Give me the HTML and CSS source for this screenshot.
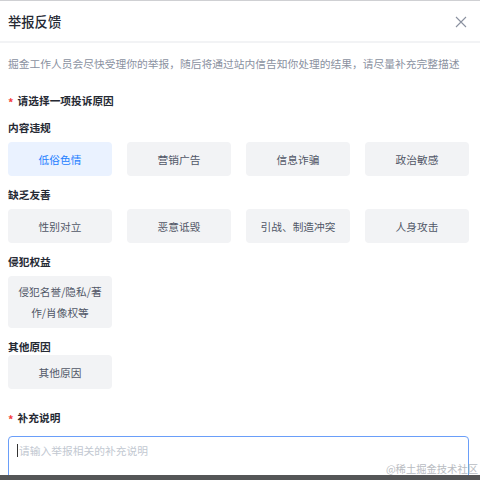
FILE: index.html
```html
<!DOCTYPE html>
<html lang="zh-CN">
<head>
<meta charset="utf-8">
<link rel="stylesheet" href="styles.css">
</head>
<body>
<div class="dialog">
  <div class="header">
    <div class="title">举报反馈</div>
    <svg class="close" width="12" height="12" viewBox="0 0 12 12"><path d="M1 1L11 11M11 1L1 11" stroke="#8a919f" stroke-width="1.1" fill="none"/></svg>
  </div>
  <div class="body">
    <p class="desc">掘金工作人员会尽快受理你的举报，随后将通过站内信告知你处理的结果，请尽量补充完整描述</p>
    <div class="req"><span class="star">*</span>请选择一项投诉原因</div>
    <div class="group">
      <div class="glabel">内容违规</div>
      <div class="opts">
        <div class="opt active">低俗色情</div>
        <div class="opt">营销广告</div>
        <div class="opt">信息诈骗</div>
        <div class="opt">政治敏感</div>
      </div>
    </div>
    <div class="group">
      <div class="glabel">缺乏友善</div>
      <div class="opts">
        <div class="opt">性别对立</div>
        <div class="opt">恶意诋毁</div>
        <div class="opt">引战、制造冲突</div>
        <div class="opt">人身攻击</div>
      </div>
    </div>
    <div class="group">
      <div class="glabel">侵犯权益</div>
      <div class="opts">
        <div class="opt tall">侵犯名誉/隐私/著作/肖像权等</div>
      </div>
    </div>
    <div class="group last">
      <div class="glabel">其他原因</div>
      <div class="opts">
        <div class="opt">其他原因</div>
      </div>
    </div>
    <div class="req req2"><span class="star">*</span>补充说明</div>
    <div class="textarea"><span class="caret"></span><span class="ph">请输入举报相关的补充说明</span></div>
  </div>
</div>
<div class="bottombar"></div>
<div class="watermark">@稀土掘金技术社区</div>
</body>
</html>
```
FILE: styles.css
```css
* { box-sizing: border-box; }
html, body { margin: 0; padding: 0; background: #fff; }
body {
  width: 480px;
  height: 480px;
  overflow: hidden;
  position: relative;
  font-family: "Noto Sans CJK SC", "Noto Sans", sans-serif;
  color: #252933;
  border-top: 1px solid #cfd0d3;
}
.dialog { display: flex; flex-direction: column; }
.header {
  height: 42px;
  display: flex;
  align-items: center;
  justify-content: space-between;
  padding: 2px 13px 0 8px;
  border-bottom: 2px solid #f2f3f5;
}
.title { font-size: 13.3px; font-weight: 500; line-height: 20px; color: #252933; }
.close { display: block; }
.body { padding: 11px 11px 0 8px; }
.desc {
  margin: 0;
  font-size: 10.75px;
  line-height: 20px;
  color: #8a919f;
  white-space: nowrap;
}
.req {
  margin-top: 19px;
  font-size: 10.7px;
  line-height: 16px;
  font-weight: 700;
  color: #252933;
  display: flex;
  align-items: center;
}
.star { color: #f53f3f; font-size: 11px; margin-right: 4px; font-weight: 700; position: relative; top: 1px; }
.group { margin-top: 11px; }
.group + .group { margin-top: 11px; }
.glabel {
  font-size: 10.7px;
  line-height: 16px;
  font-weight: 700;
  color: #252933;
  margin-bottom: 6px;
}
.group.last .glabel { margin-bottom: 0; }
.opts {
  display: grid;
  grid-template-columns: repeat(4, 104px);
  column-gap: 15px;
}
.opt {
  height: 34px;
  border-radius: 4px;
  background: #f2f3f5;
  color: #515767;
  font-size: 10.7px;
  display: flex;
  align-items: center;
  justify-content: center;
  text-align: center;
  padding: 0 10px;
}
.opt.active { background: #eaf2ff; color: #1e80ff; }
.opt.tall { height: 52px; line-height: 21px; }
.req2 { margin-top: 21px; }
.textarea {
  margin-top: 10px;
  height: 60px;
  border: 1px solid #6a9ef9;
  border-radius: 4px;
  padding: 6px 8px;
  display: flex;
  align-items: flex-start;
  font-size: 10.75px;
  line-height: 16px;
}
.caret { width: 1px; height: 13px; background: #333; margin-top: 1px; margin-right: 1px; }
.ph { color: #c2c8d1; }
.bottombar {
  position: absolute;
  left: 0; right: 0; bottom: 0;
  height: 5px;
  background: #555657;
}
.watermark {
  position: absolute;
  right: 2px;
  bottom: 4px;
  font-size: 10.3px;
  line-height: 14px;
  color: #b9bcc2;
}
```
